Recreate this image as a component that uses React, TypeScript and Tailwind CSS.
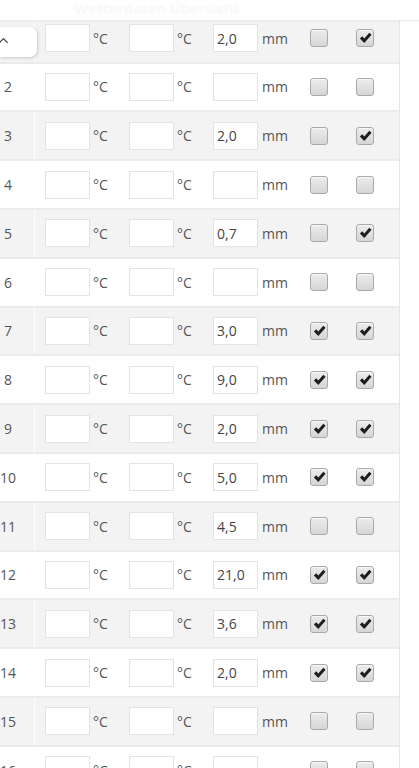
import { ChevronUp } from 'lucide-react'

type Row = { n: number; depth: string; a: boolean; b: boolean }

const rows: Row[] = [
  { n: 1, depth: '2,0', a: false, b: true },
  { n: 2, depth: '', a: false, b: false },
  { n: 3, depth: '2,0', a: false, b: true },
  { n: 4, depth: '', a: false, b: false },
  { n: 5, depth: '0,7', a: false, b: true },
  { n: 6, depth: '', a: false, b: false },
  { n: 7, depth: '3,0', a: true, b: true },
  { n: 8, depth: '9,0', a: true, b: true },
  { n: 9, depth: '2,0', a: true, b: true },
  { n: 10, depth: '5,0', a: true, b: true },
  { n: 11, depth: '4,5', a: false, b: false },
  { n: 12, depth: '21,0', a: true, b: true },
  { n: 13, depth: '3,6', a: true, b: true },
  { n: 14, depth: '2,0', a: true, b: true },
  { n: 15, depth: '', a: false, b: false },
  { n: 16, depth: '', a: false, b: false },
]

function Check({ on }: { on: boolean }) {
  return (
    <span className="flex items-center justify-center w-[18px] h-[18px] rounded-[3px] border border-[#a9a9a9] bg-gradient-to-b from-[#ececec] to-[#d6d6d6] shadow-[inset_0_1px_0_#f8f8f8]">
      {on && (
        <svg width="13" height="12" viewBox="0 0 12 11">
          <path d="M0.8 6 L3 3.9 L4.9 5.9 L9.5 0.7 L11.6 2.6 L4.9 10 Z" fill="#1e1e1e" />
        </svg>
      )}
    </span>
  )
}

function Box({ value }: { value?: string }) {
  return (
    <div className="w-[45px] h-[28px] bg-white border border-[#e3e3e3] flex items-center pl-[3px] text-[#444]">
      {value}
    </div>
  )
}

function App() {
  return (
    <div className="relative w-[419px] h-[768px] overflow-hidden bg-white text-[14px] text-[#555] font-['Open_Sans',sans-serif]">
      {/* sticky header, scrolled content passes under it */}
      <header className="absolute top-0 left-0 right-0 z-20 h-[21px] bg-white border-b border-[#ececec] shadow-[0_1px_2px_rgba(0,0,0,0.04)] overflow-hidden">
        <div className="pl-[74px] text-[15px] leading-[16px] font-semibold text-[#f4f4f4] blur-[1.2px] whitespace-nowrap">
          Wetterdaten Übersicht
        </div>
      </header>

      {/* scroll-to-top tab */}
      <button className="absolute z-10 left-0 top-[27px] w-[37px] h-[30px] bg-white rounded-r-[7px] shadow-[1px_1px_3px_rgba(0,0,0,0.18)] overflow-hidden">
        <ChevronUp className="absolute -left-[4px] top-[6px] w-[15px] h-[15px] text-[#444]" strokeWidth={2.2} />
      </button>

      <div className="mt-[14.8px] w-[400px] border-r border-[#e4e4e4]">
        {rows.map((r) => (
          <div
            key={r.n}
            className={`flex items-center h-[48.8px] border-b-2 border-[#ebebeb] ${r.n % 2 === 1 ? 'bg-[#f3f3f3]' : 'bg-white'}`}
          >
            <div className="w-[35px] h-full border-r border-white flex items-center">
              <span className="w-4 text-center">{r.n}</span>
            </div>
            <div className="ml-[10px]">
              <Box />
            </div>
            <span className="w-[39px] pl-[3px]">°C</span>
            <Box />
            <span className="w-[39px] pl-[3px]">°C</span>
            <Box value={r.depth} />
            <span className="w-[52px] pl-[4px]">mm</span>
            <Check on={r.a} />
            <span className="ml-[28px]">
              <Check on={r.b} />
            </span>
          </div>
        ))}
      </div>
    </div>
  )
}

export default App
